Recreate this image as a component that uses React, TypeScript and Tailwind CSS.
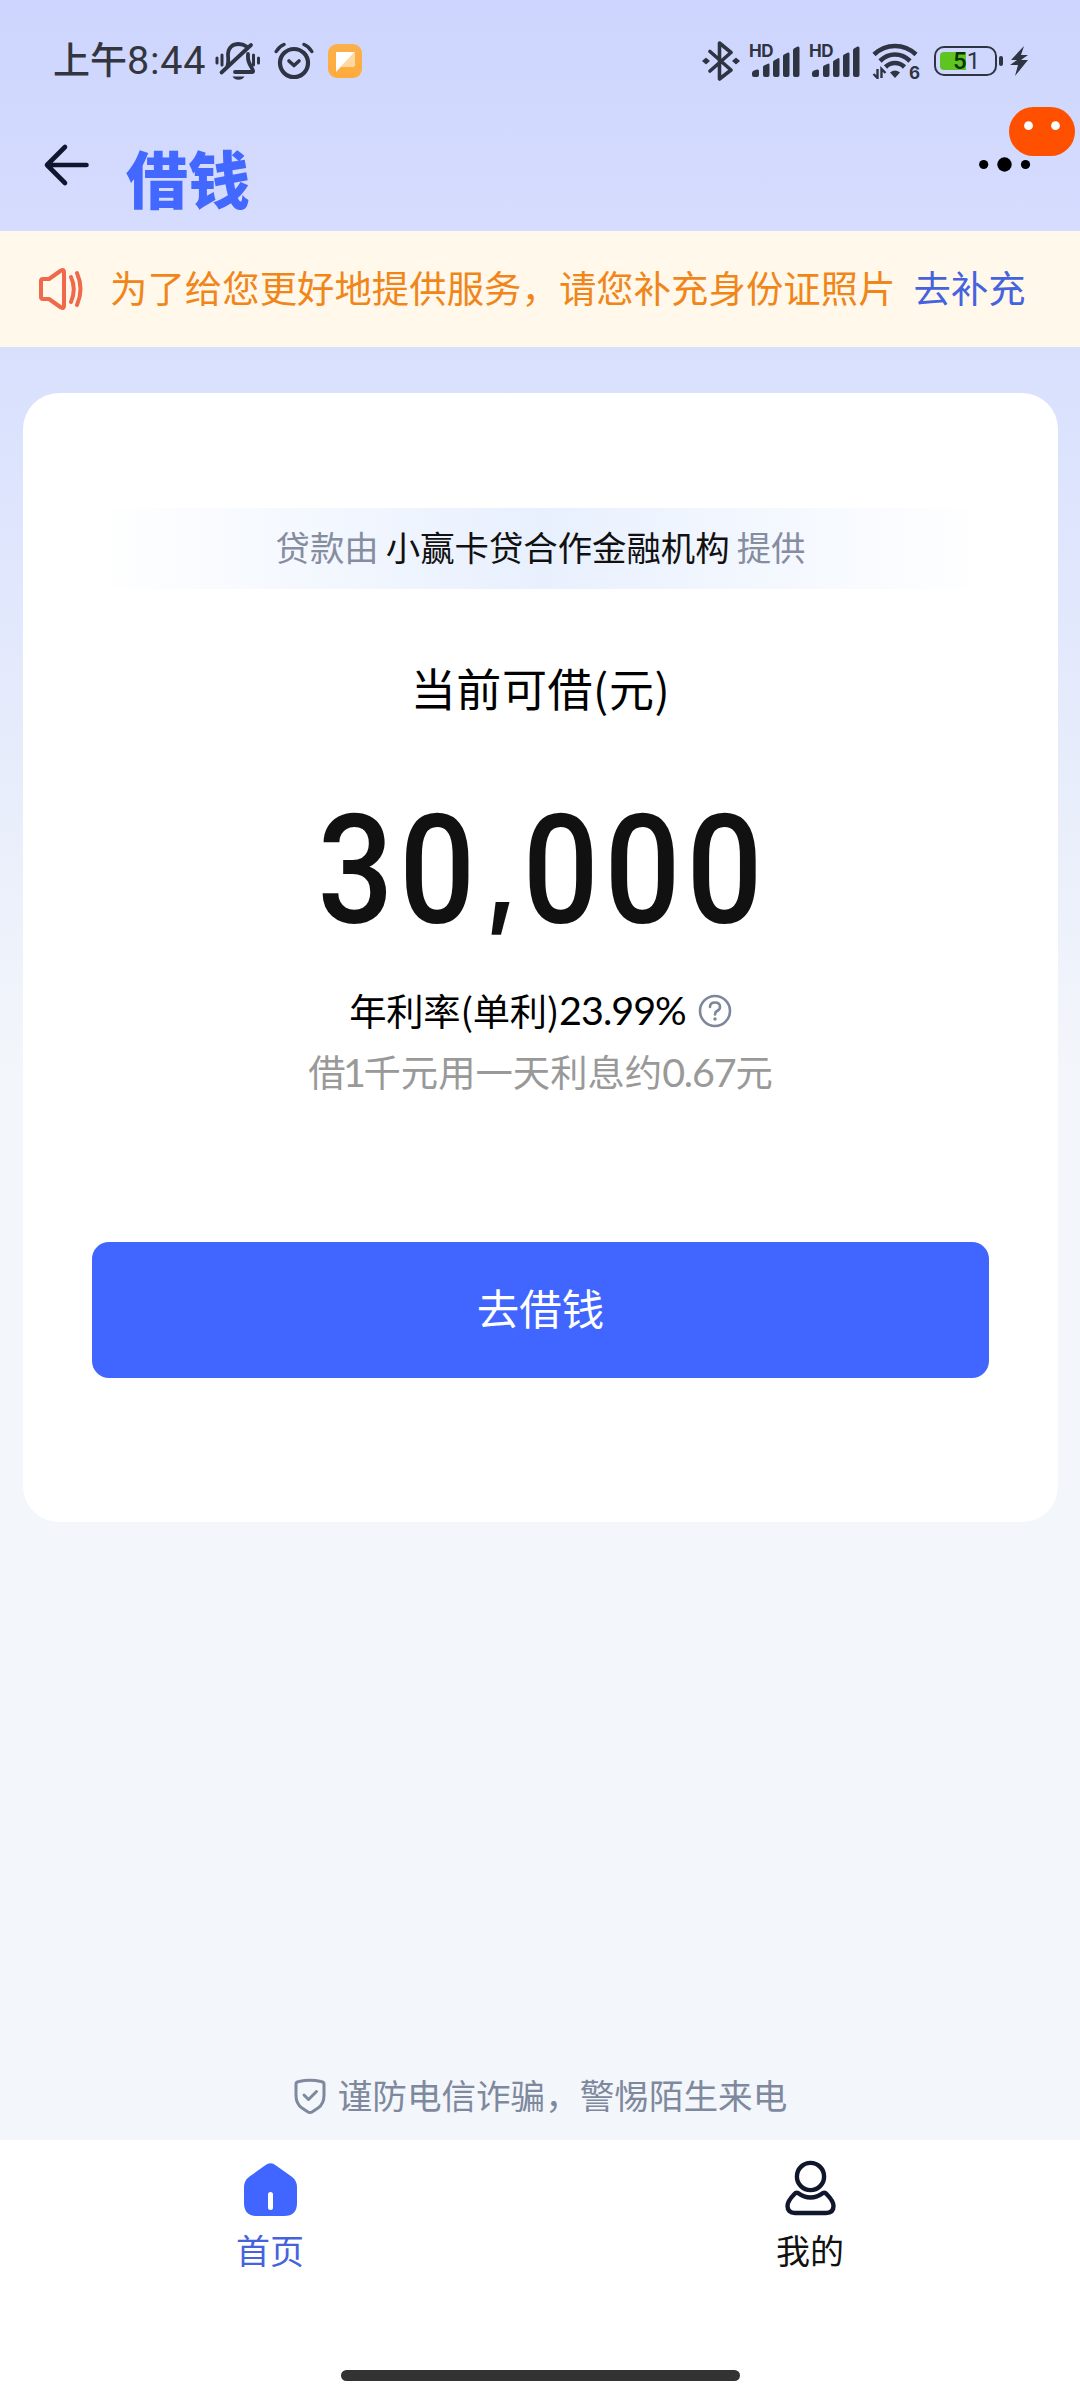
import React from "react";

const INK = "#2f3443";

function MutedBell() {
  return (
    <svg width="46" height="40" viewBox="0 0 46 40" fill="none" stroke={INK} strokeWidth="3.8" strokeLinecap="round">
      <path d="M2 17v5M7 14v10M38.500 14v10M43.500 17v5" strokeWidth="3" />
      <path d="M12.500 25C14 21 13 18 13 13C13.500 6 18 3 23.500 3C27 3 29.500 4 31.500 5.500" />
      <path d="M33 13V17C33 22 36 25 38 29.500Q38.500 31 37 31H20" />
      <path d="M36 4L6.500 31.500" />
      <path d="M17.500 35.500H29.500Q27.500 38.800 23.500 38.800T17.500 35.500Z" fill={INK} stroke="none" />
    </svg>
  );
}

function AlarmIcon() {
  return (
    <svg width="40" height="38" viewBox="0 0 40 38" fill="none" stroke={INK} strokeLinecap="round" strokeLinejoin="round">
      <circle cx="20" cy="21" r="14" strokeWidth="4.200" />
      <path d="M15 19l5 4.500 5-4.500" strokeWidth="3.600" />
      <path d="M2.200 9.500Q5 4.500 10 2.500M37.800 9.500Q35 4.500 30 2.500" strokeWidth="3.400" />
    </svg>
  );
}

function NoteIcon() {
  return (
    <svg width="34" height="34" viewBox="0 0 34 34">
      <defs>
        <linearGradient id="note" x1="0" y1="0" x2="0" y2="1">
          <stop offset="0" stopColor="#fbb04a" />
          <stop offset="1" stopColor="#ffab3c" />
        </linearGradient>
      </defs>
      <rect width="34" height="34" rx="9" fill="url(#note)" />
      <path d="M8 8H27L8 28Z" fill="#fff" />
      <path d="M27 8V21Q27 23 25 23H12.500Z" fill="#ffd9a0" />
    </svg>
  );
}

function BluetoothIcon() {
  return (
    <svg width="38" height="40" viewBox="0 0 38 40" fill="none" stroke={INK} strokeWidth="3.600" strokeLinejoin="round" strokeLinecap="round">
      <path d="M8 10.500L29 29L17.500 38V2L29 11.500L8 30" />
      <path d="M1 20l3-2.500 3 2.500-3 2.500zM31 20l3-2.500 3 2.500-3 2.500z" fill={INK} strokeWidth="1.500" />
    </svg>
  );
}

function SignalIcon() {
  return (
    <div className="relative h-[34px] w-[51px]">
      <span className="absolute -top-[5px] left-0 text-[17px] leading-[24px] font-bold tracking-[-0.500px] text-[#2f3443]">HD</span>
      <svg className="absolute inset-0" width="51" height="34" viewBox="0 0 51 34" fill={INK}>
        <path d="M3 29Q3 27 5 26.500L8 25.500Q10 25 10 27V31Q10 33 8 33H5Q3 33 3 31Z" />
        <path d="M14 23Q14 22 15 21.500L19 19.700Q20.500 19.300 20.500 21V31Q20.500 33 18.500 33H16Q14 33 14 31Z" />
        <path d="M24 18Q24 17 25 16.500L29 14.200Q30.500 13.700 30.500 15.500V31Q30.500 33 28.500 33H26Q24 33 24 31Z" />
        <path d="M34 12Q34 11 35 10.500L39 8.500Q40.500 8 40.500 10V31Q40.500 33 38.500 33H36Q34 33 34 31Z" />
        <path d="M44 6.500Q44 5 45 4.500L48.500 2.500Q50.500 2 50.500 4V31Q50.500 33 48.500 33H46Q44 33 44 31Z" />
      </svg>
    </div>
  );
}

function WifiIcon() {
  return (
    <div className="relative h-[36px] w-[47px]">
      <svg width="47" height="36" viewBox="0 0 47 36" fill="none" stroke={INK} strokeWidth="4.600">
        <path d="M2 11.500Q11 3 23 3T44 11.500" />
        <path d="M8 18Q14.500 11.500 23 11.500T38 18" />
        <path d="M13.500 24Q17.500 20 23 20T32.500 24" />
        <path d="M18 29.500Q23 25.500 28 29.500L23 35Z" fill={INK} stroke="none" />
        <path d="M5.500 26V35L1.500 31M9.500 35V26L13.500 30" strokeWidth="2.400" />
      </svg>
      <span className="absolute -right-[1px] -bottom-[4px] text-[17px] leading-[20px] font-bold text-[#2f3443]">6</span>
    </div>
  );
}

function Battery() {
  return (
    <div className="flex items-center">
      <div className="relative h-[30px] w-[63px] rounded-[10px] border-[2.500px] border-[#2f3443] p-[4px]">
        <div className="h-full w-[26px] rounded-l-[4px] bg-[#5ec420]" />
        <span className="absolute top-0 left-[17px] font-['Roboto'] text-[24px] leading-[26px] font-normal text-[#2f3443]">
          <span className="font-medium text-[#0c3305]">5</span>1
        </span>
      </div>
      <div className="ml-[2px] h-[10px] w-[4px] rounded-[2px] bg-[#2f3443]" />
      <svg className="ml-[7px]" width="18" height="30" viewBox="0 0 18 30" fill={INK}>
        <path d="M14 0L1 14H7L0 19H8L5 30L18 14H11L18 9H11Z" />
      </svg>
    </div>
  );
}

function StatusBar() {
  return (
    <div className="flex h-[122px] items-center pr-[52px] pl-[53px] font-['Inter','Noto_Sans_CJK_SC',sans-serif]">
      <span className="w-[153px] text-[37px] leading-[40px] font-medium whitespace-nowrap text-[#33363f]">
        上午<span className="font-['Roboto'] text-[39.500px] font-normal tracking-[0.800px]">8:44</span>
      </span>
      <div className="ml-[9px] flex items-center">
        <MutedBell />
        <div className="ml-[13px]"><AlarmIcon /></div>
        <div className="ml-[14px]"><NoteIcon /></div>
      </div>
      <div className="ml-auto flex items-center">
        <BluetoothIcon />
        <div className="ml-[9px]"><SignalIcon /></div>
        <div className="ml-[9px]"><SignalIcon /></div>
        <div className="ml-[12px]"><WifiIcon /></div>
        <div className="ml-[15px]"><Battery /></div>
      </div>
    </div>
  );
}

function TitleBar() {
  return (
    <header className="relative flex h-[109px] items-start">
      <svg className="mt-[21px] ml-[43px]" width="48" height="44" viewBox="0 0 48 44" fill="none" stroke="#0e1630" strokeWidth="4.600" strokeLinecap="round" strokeLinejoin="round">
        <path d="M43.500 22H4M22 4L4 22L22 40" />
      </svg>
      <h1 className="mt-[20px] ml-[35px] text-[62px] leading-[70px] font-black text-[#4368ff]">借钱</h1>
      <svg className="absolute top-[-16px] right-[4px]" width="97" height="67" viewBox="0 0 97 67">
        <circle cx="4.700" cy="58.500" r="4.600" />
        <circle cx="25.500" cy="58.500" r="7.200" />
        <circle cx="46.500" cy="58.500" r="4.600" />
        <rect x="30" y="1" width="66" height="49" rx="24.500" fill="#ff5000" />
        <circle cx="49.500" cy="19.700" r="4.400" fill="#fff" />
        <circle cx="76.500" cy="19.700" r="4.400" fill="#fff" />
      </svg>
    </header>
  );
}

function Notice() {
  return (
    <div className="flex h-[116px] items-center bg-[#fff8eb] text-[37.330px] leading-[50px] whitespace-nowrap">
      <svg className="ml-[38px] shrink-0" width="46" height="42" viewBox="0 0 46 42" fill="none" stroke="#f0694a" strokeWidth="4" strokeLinecap="round" strokeLinejoin="round">
        <path d="M3 13Q3 11 5 11H11L23 2.500Q26 1 26 4V38Q26 41 23 39.500L11 31H5Q3 31 3 29Z" />
        <path d="M33 9Q38.500 21 33 34M39 5Q46 21 39 37" />
      </svg>
      <span className="mb-[4px] ml-[26px] tracking-[0.080px] text-[#f0861a]">为了给您更好地提供服务，请您补充身份证照片</span>
      <a className="mb-[4px] ml-[18px] text-[#4563dd]">去补充</a>
    </div>
  );
}

function LoanCard() {
  return (
    <main className="mr-[22px] ml-[23px] mt-[46px] flex h-[1129px] flex-col items-center rounded-[36px] bg-white">
      <div className="mt-[115px] flex h-[81px] w-[896px] items-center justify-center gap-[7px] bg-linear-to-r from-white via-[#e8f0fe] to-white pb-[6px] text-[34.400px] leading-[50px] text-[#858d9f]">
        <span>贷款由</span>
        <span className="text-[#111]">小赢卡贷合作金融机构</span>
        <span>提供</span>
      </div>
      <h2 className="mt-[67px] text-[45px] leading-[64px] tracking-[0.600px] text-black">当前可借(元)</h2>
      <p className="mt-[86px] h-[130px] scale-x-[0.880] pl-[5px] font-['Roboto'] text-[152px] leading-[130px] font-medium tracking-[6.700px] whitespace-nowrap text-[#111]">
        30<span className="inline-block w-[47px] -translate-y-[9px] text-center font-['Inter'] text-[108px] leading-none font-bold tracking-normal">,</span>000
      </p>
      <div className="mt-[47px] flex items-center text-[37.330px] leading-[54px] text-black">
        <span className="tracking-[-0.300px]">年利率(单利)</span>
        <span className="font-['Lato'] text-[39.500px] tracking-[-1px]">23.99%</span>
        <svg className="mt-[2px] ml-[12px]" width="34" height="34" viewBox="0 0 34 34" fill="none" stroke="#7d879b" strokeWidth="2.600" strokeLinecap="round">
          <circle cx="17" cy="17" r="15" />
          <path d="M12 13Q12 8.500 17 8.500T22 13Q22 15.500 19 17Q17 18 17 20.500" />
          <circle cx="17" cy="25" r="1" fill="#7d879b" strokeWidth="1.500" />
        </svg>
      </div>
      <p className="mt-[7px] text-[37.330px] leading-[54px] text-[#999]">
        借<span className="-mx-[2.500px] font-['Lato'] text-[39.500px]">1</span>千元用一天利息约<span className="font-['Lato'] text-[39.500px] tracking-[-1.200px]">0.67</span>元
      </p>
      <button className="mt-[143px] h-[136px] w-[897px] rounded-[17px] bg-[#4066ff] pb-[7px] text-[42.500px] text-white">去借钱</button>
    </main>
  );
}

function BottomNav() {
  return (
    <nav className="flex h-[260px] flex-col items-center bg-white">
      <div className="grid w-full grid-cols-2 text-[34px] leading-[48px]">
        <div className="flex flex-col items-center pt-[20px] text-[#4563dd]">
          <svg width="56" height="58" viewBox="0 0 56 58">
            <path d="M23 5.500Q28.500 1 34 5.500L49.500 16.500Q55 20.500 55 27V43Q55 56 42 56H15Q2 56 2 43V27Q2 20.500 7.500 16.500Z" fill="#4066ff" />
            <rect x="26" y="32" width="5" height="18" rx="2.500" fill="#fff" />
          </svg>
          <span className="mt-[8px]">首页</span>
        </div>
        <div className="flex flex-col items-center pt-[20px] text-[#111]">
          <svg width="56" height="58" viewBox="0 0 56 58" fill="none" stroke="#10172d" strokeWidth="4.400" strokeLinejoin="round">
            <circle cx="28.500" cy="16.500" r="13.600" />
            <path d="M16 33Q22 37.500 28.500 37.500T41 33Q43 32 44.500 34Q51.500 41 51.500 46Q51.500 53 44 53H13Q5.500 53 5.500 46Q5.500 41 12.500 34Q14 32 16 33Z" />
          </svg>
          <span className="mt-[8px]">我的</span>
        </div>
      </div>
      <div className="mt-auto mb-[19px] h-[11px] w-[399px] rounded-full bg-[#333]" />
    </nav>
  );
}

export default function App() {
  return (
    <div className="flex h-[2400px] w-[1080px] flex-col overflow-hidden bg-[#f3f6fb] bg-[linear-gradient(180deg,#ced5fe_0px,#dbe2fd_420px,#f3f6fa_1080px)] font-['Noto_Sans_CJK_SC',sans-serif]">
      <StatusBar />
      <TitleBar />
      <Notice />
      <LoanCard />
      <div className="mt-auto mb-[17px] flex items-center justify-center text-[34.600px] leading-[52px] text-[#7f899e]">
        <svg className="mt-[1px] mr-[12px] ml-[1px]" width="32" height="36" viewBox="0 0 32 36" fill="none" stroke="#7f899e" strokeWidth="3" strokeLinecap="round" strokeLinejoin="round">
          <path d="M2 6Q2 4 5 3.500Q16 .8 27 3.500Q30 4 30 6V17Q30 26 24 30L18 34Q16 35 14 34L8 30Q2 26 2 17Z" />
          <path d="M10 17l4.500 4.500 8-8" />
        </svg>
        <span className="mb-[3px]">谨防电信诈骗，警惕陌生来电</span>
      </div>
      <BottomNav />
    </div>
  );
}
